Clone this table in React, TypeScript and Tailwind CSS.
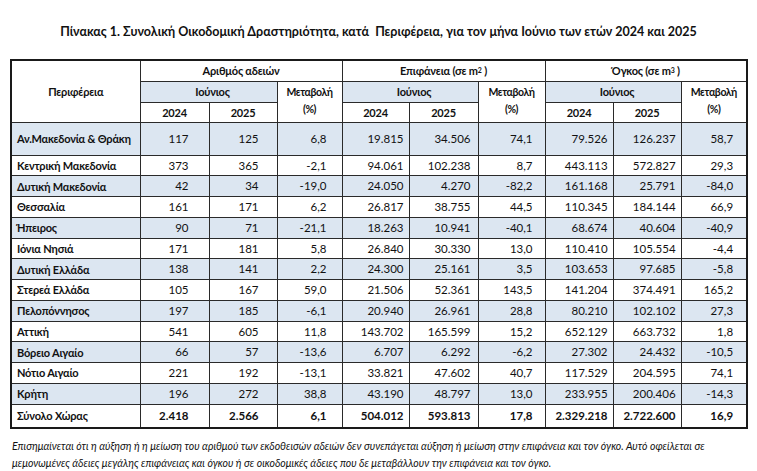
import React from "react";

type Row = {
  name: string;
  v: string[];
  blue?: boolean;
  bold?: boolean;
};

const rows: Row[] = [
  { name: "Αν.Μακεδονία & Θράκη", v: ["117", "125", "6,8", "19.815", "34.506", "74,1", "79.526", "126.237", "58,7"], blue: true },
  { name: "Κεντρική Μακεδονία", v: ["373", "365", "-2,1", "94.061", "102.238", "8,7", "443.113", "572.827", "29,3"] },
  { name: "Δυτική Μακεδονία", v: ["42", "34", "-19,0", "24.050", "4.270", "-82,2", "161.168", "25.791", "-84,0"], blue: true },
  { name: "Θεσσαλία", v: ["161", "171", "6,2", "26.817", "38.755", "44,5", "110.345", "184.144", "66,9"] },
  { name: "Ήπειρος", v: ["90", "71", "-21,1", "18.263", "10.941", "-40,1", "68.674", "40.604", "-40,9"], blue: true },
  { name: "Ιόνια Νησιά", v: ["171", "181", "5,8", "26.840", "30.330", "13,0", "110.410", "105.554", "-4,4"] },
  { name: "Δυτική Ελλάδα", v: ["138", "141", "2,2", "24.300", "25.161", "3,5", "103.653", "97.685", "-5,8"], blue: true },
  { name: "Στερεά Ελλάδα", v: ["105", "167", "59,0", "21.506", "52.361", "143,5", "141.204", "374.491", "165,2"] },
  { name: "Πελοπόννησος", v: ["197", "185", "-6,1", "20.940", "26.961", "28,8", "80.210", "102.102", "27,3"], blue: true },
  { name: "Αττική", v: ["541", "605", "11,8", "143.702", "165.599", "15,2", "652.129", "663.732", "1,8"] },
  { name: "Βόρειο Αιγαίο", v: ["66", "57", "-13,6", "6.707", "6.292", "-6,2", "27.302", "24.432", "-10,5"], blue: true },
  { name: "Νότιο Αιγαίο", v: ["221", "192", "-13,1", "33.821", "47.602", "40,7", "117.529", "204.595", "74,1"] },
  { name: "Κρήτη", v: ["196", "272", "38,8", "43.190", "48.797", "13,0", "233.955", "200.406", "-14,3"], blue: true },
  { name: "Σύνολο Χώρας", v: ["2.418", "2.566", "6,1", "504.012", "593.813", "17,8", "2.329.218", "2.722.600", "16,9"], bold: true },
];

// right padding per number column, taken from the reference
const padRight = [
  "pr-[20px]",
  "pr-[18px]",
  "pr-[15px]",
  "pr-[5px]",
  "pr-[7px]",
  "pr-[12px]",
  "pr-[5px]",
  "pr-[5px]",
  "pr-[13px]",
];

const rowHeight = (i: number) => {
  if (i === 0) return "h-[33px]";
  if (i === rows.length - 1) return "h-[24px]";
  return "h-[20.75px]";
};

const border = "border border-[#2a2a2a] p-0";
const head = `${border} leading-none font-bold text-[11px] tracking-[-0.2px]`;
const change = `${border} leading-[17px] pb-[2px] font-bold text-[10.5px] tracking-[-0.4px]`;

const Change = () => (
  <th rowSpan={2} className={change}>
    Μεταβολή
    <br />
    (%)
  </th>
);

export default function App() {
  return (
    <div
      className="w-[757px] h-[471px] bg-white text-[#111] overflow-hidden"
      style={{ fontFamily: "Lato, 'Open Sans', sans-serif" }}
    >
      <h1 className="pt-[23px] h-[59px] text-center text-[12.5px] font-bold">
        Πίνακας 1. Συνολική Οικοδομική Δραστηριότητα, κατά&nbsp; Περιφέρεια, για τον μήνα Ιούνιο των ετών 2024 και 2025
      </h1>

      <table className="ml-[10px] w-[736px] table-fixed border-collapse border-2 border-[#1a1a1a] text-[11.5px]">
        <colgroup>
          <col className="w-[129px]" />
          <col className="w-[69px]" />
          <col className="w-[68px]" />
          <col className="w-[65px]" />
          <col className="w-[67px]" />
          <col className="w-[69px]" />
          <col className="w-[67px]" />
          <col className="w-[68px]" />
          <col className="w-[68px]" />
          <col className="w-[66px]" />
        </colgroup>
        <thead className="text-center">
          <tr className="h-[21px]">
            <th rowSpan={3} className={head}>
              Περιφέρεια
            </th>
            <th colSpan={3} className={head}>
              Αριθμός αδειών
            </th>
            <th colSpan={3} className={head}>
              Επιφάνεια (σε m<sup className="text-[7px] relative -top-[2px]">2</sup> )
            </th>
            <th colSpan={3} className={head}>
              Όγκος (σε m<sup className="text-[7px] relative -top-[2px]">3</sup> )
            </th>
          </tr>
          <tr className="h-[21px]">
            <th colSpan={2} className={`${head} bg-[#dce6f1] pl-[8px]`}>
              Ιούνιος
            </th>
            <Change />
            <th colSpan={2} className={`${head} bg-[#dce6f1] pl-[8px]`}>
              Ιούνιος
            </th>
            <Change />
            <th colSpan={2} className={`${head} bg-[#dce6f1] pl-[8px]`}>
              Ιούνιος
            </th>
            <Change />
          </tr>
          <tr className="h-[20px]">
            {["2024", "2025", "2024", "2025", "2024", "2025"].map((y, i) => (
              <th key={i} className={head}>
                {y}
              </th>
            ))}
          </tr>
        </thead>
        <tbody>
          {rows.map((r, i) => (
            <tr
              key={r.name}
              className={`${rowHeight(i)} ${r.blue ? "bg-[#dce6f1]" : "bg-white"} ${r.bold ? "font-bold" : ""}`}
            >
              <td className={`${border} leading-none pl-[5px] font-bold text-left text-[11px] tracking-[-0.2px] whitespace-nowrap`}>
                {r.name}
              </td>
              {r.v.map((val, j) => (
                <td key={j} className={`${border} leading-none text-right ${padRight[j]}`}>
                  {val}
                </td>
              ))}
            </tr>
          ))}
        </tbody>
      </table>

      <p className="mt-[9px] pl-[12px] pr-[8px] text-[10.5px] italic leading-[17px]">
        Επισημαίνεται ότι η αύξηση ή η μείωση του αριθμού των εκδοθεισών αδειών δεν συνεπάγεται αύξηση ή μείωση στην επιφάνεια και τον όγκο. Αυτό οφείλεται σε μεμονωμένες άδειες μεγάλης επιφάνειας και όγκου ή σε οικοδομικές άδειες που δε μεταβάλλουν την επιφάνεια και τον όγκο.
      </p>
    </div>
  );
}
